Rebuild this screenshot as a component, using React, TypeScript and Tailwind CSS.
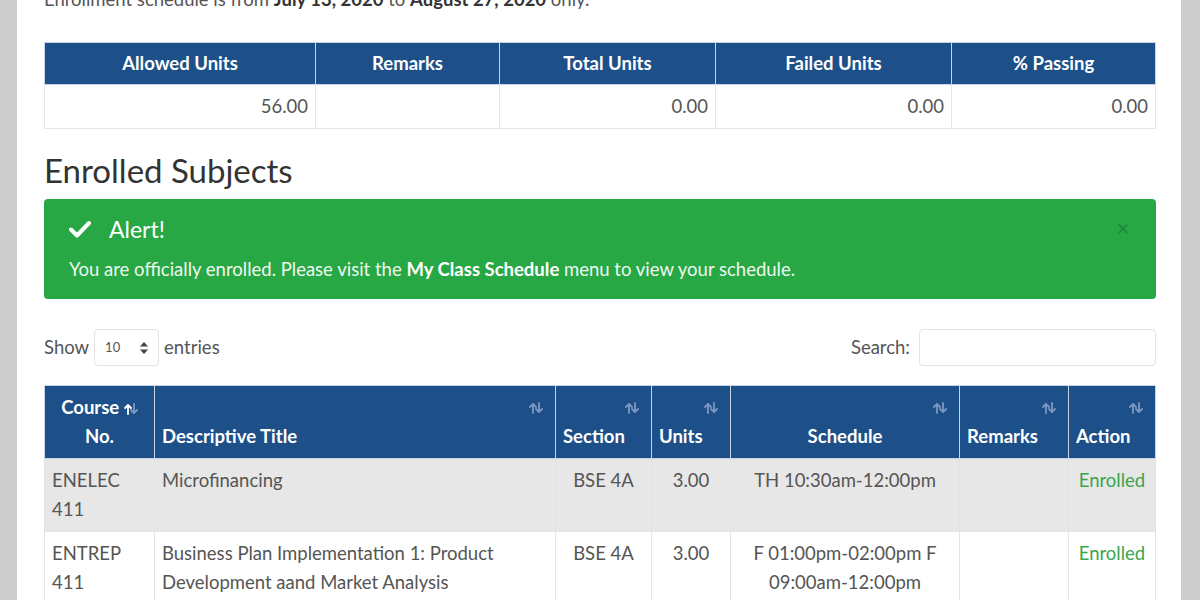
import React from 'react';

const SortIcon = ({ active }: { active?: boolean }) => (
  <svg width="14" height="12" viewBox="0 0 14 12" className="inline-block">
    <g fill="none" strokeWidth="1.8" strokeLinecap="round" strokeLinejoin="round">
      <path d="M4 11V2M1 5l3-3 3 3" stroke={active ? '#ffffff' : '#7b98c2'} />
      <path d="M10 1v9M7 7l3 3 3-3" stroke="#7b98c2" />
    </g>
  </svg>
);

const summary = [
  { label: 'Allowed Units', value: '56.00', w: 'w-[271px]' },
  { label: 'Remarks', value: '', w: 'w-[184px]' },
  { label: 'Total Units', value: '0.00', w: 'w-[216px]' },
  { label: 'Failed Units', value: '0.00', w: 'w-[236px]' },
  { label: '% Passing', value: '0.00', w: '' },
];

const subjects = [
  {
    code: ['ENELEC', '411'],
    title: 'Microfinancing',
    section: 'BSE 4A',
    units: '3.00',
    schedule: 'TH 10:30am-12:00pm',
  },
  {
    code: ['ENTREP', '411'],
    title: 'Business Plan Implementation 1: Product Development aand Market Analysis',
    section: 'BSE 4A',
    units: '3.00',
    schedule: 'F 01:00pm-02:00pm F 09:00am-12:00pm',
  },
];

const App = () => {
  return (
    <div className="flex w-[1200px] h-[600px] overflow-hidden bg-[#cccccc] font-['Lato','Liberation_Sans',sans-serif]">
      <div className="w-[17px] shrink-0 bg-[#cccccc]" />
      <div className="flex-1 bg-white pl-[27px] pr-[25px]">
        <p className="-mt-[13px] text-[18.5px] leading-[24px] text-[#555]">
          Enrollment schedule is from <b className="text-[#333]">July 13, 2020</b> to{' '}
          <b className="text-[#333]">August 27, 2020</b> only.
        </p>

        <table className="mt-[31px] w-full border-collapse text-[18.5px]">
          <thead>
            <tr className="bg-[#1d4f89] h-[42px]">
              {summary.map((s) => (
                <th key={s.label} className={`${s.w} border border-[#c6d4e6] text-center font-bold text-white`}>
                  {s.label}
                </th>
              ))}
            </tr>
          </thead>
          <tbody>
            <tr className="h-[44px]">
              {summary.map((s) => (
                <td key={s.label} className="border border-[#e6e6e6] px-[7px] pt-[1px] text-right text-[#555]">
                  {s.value}
                </td>
              ))}
            </tr>
          </tbody>
        </table>

        <h2 className="mt-[21px] text-[33px] leading-[40px] text-[#333]">Enrolled Subjects</h2>

        <div className="mt-[9px] h-[100px] rounded-[4px] bg-[#28a745] px-[25px] pt-[15px] text-white relative">
          <div className="flex items-center gap-[18px]">
            <svg width="22" height="18" viewBox="0 0 22 18">
              <path d="M2 9.5l6 6L20 3" fill="none" stroke="#fff" strokeWidth="4" strokeLinecap="round" strokeLinejoin="round" />
            </svg>
            <span className="text-[23px] leading-[30px]">Alert!</span>
          </div>
          <p className="mt-[13px] text-[18.5px] leading-[24px] text-[#eef8ef]">
            You are officially enrolled. Please visit the <b className="text-white">My Class Schedule</b> menu to view your schedule.
          </p>
          <span className="absolute right-[27px] top-[17px] text-[21px] leading-[24px] text-[#1c7a33] opacity-70">×</span>
        </div>

        <div className="mt-[30px] flex items-center justify-between text-[18.5px] text-[#555]">
          <div className="flex items-center gap-[5px]">
            <span>Show</span>
            <div className="flex h-[37px] w-[65px] items-center justify-between rounded-[4px] border border-[#e3e3e3] px-[10px] text-[13px]">
              <span>10</span>
              <svg width="8" height="12" viewBox="0 0 8 12">
                <path d="M4 0l4 4.5H0zM4 12L0 7.5h8z" fill="#444" />
              </svg>
            </div>
            <span>entries</span>
          </div>
          <div className="flex items-center gap-[9px]">
            <span>Search:</span>
            <div className="h-[37px] w-[237px] rounded-[4px] border border-[#e3e3e3]" />
          </div>
        </div>

        <table className="mt-[19px] w-full border-collapse text-[18.5px]">
          <thead>
            <tr className="h-[73px] bg-[#1d4f89] text-white">
              <th className="w-[110px] border border-[#c6d4e6] align-top pt-[7px] leading-[29px]">
                <div>Course <SortIcon active /></div>
                <div>No.</div>
              </th>
              {[
                { t: 'Descriptive Title', w: 'w-[401px]', c: 'text-left' },
                { t: 'Section', w: 'w-[96px]', c: 'text-left' },
                { t: 'Units', w: 'w-[79px]', c: 'text-left' },
                { t: 'Schedule', w: 'w-[229px]', c: 'text-center' },
                { t: 'Remarks', w: 'w-[109px]', c: 'text-left' },
                { t: 'Action', w: '', c: 'text-left' },
              ].map((h) => (
                <th key={h.t} className={`${h.w} border border-[#c6d4e6] px-[7px] pt-[16px] pb-[5px] align-top`}>
                  <div className="flex h-[14px] justify-end pr-[5px]">
                    <SortIcon />
                  </div>
                  <div className={`${h.c} mt-[6px] leading-[29px]`}>{h.t}</div>
                </th>
              ))}
            </tr>
          </thead>
          <tbody className="text-[#555]">
            {subjects.map((s, i) => (
              <tr key={s.title} className={i % 2 === 0 ? 'bg-[#e7e7e7]' : 'bg-white'}>
                <td className="border border-[#e3e3e3] px-[7px] pt-[7px] pb-[7px] align-top leading-[29px]">
                  {s.code[0]}
                  <br />
                  {s.code[1]}
                </td>
                <td className="border border-[#e3e3e3] px-[7px] pt-[7px] pb-[7px] align-top leading-[29px]">{s.title}</td>
                <td className="border border-[#e3e3e3] px-[7px] pt-[7px] align-top text-center leading-[29px]">{s.section}</td>
                <td className="border border-[#e3e3e3] px-[7px] pt-[7px] align-top text-center leading-[29px]">{s.units}</td>
                <td className="border border-[#e3e3e3] px-[20px] pt-[7px] align-top text-center leading-[29px]">{s.schedule}</td>
                <td className="border border-[#e3e3e3] px-[7px] pt-[7px] align-top leading-[29px]"></td>
                <td className="border border-[#e3e3e3] px-[7px] pt-[7px] align-top text-center leading-[29px] text-[#3aa54f]">Enrolled</td>
              </tr>
            ))}
          </tbody>
        </table>
      </div>
      <div className="w-[19px] shrink-0 bg-[#cccccc]" />
    </div>
  );
};

export default App;
